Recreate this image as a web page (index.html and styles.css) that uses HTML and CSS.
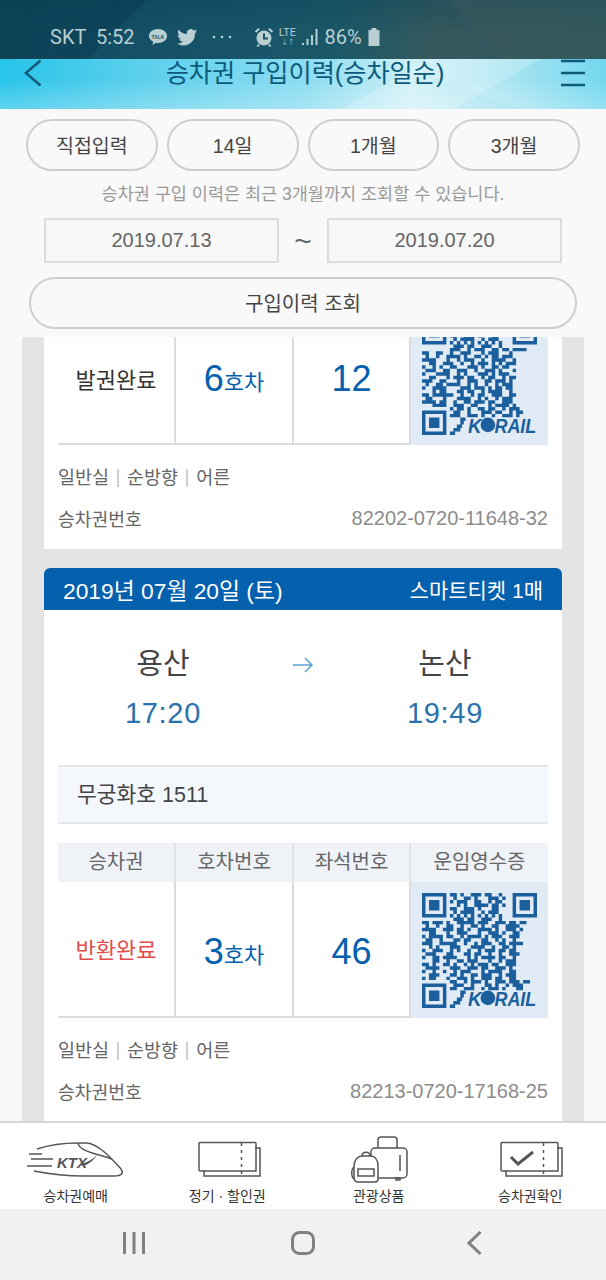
FILE: index.html
```html
<!DOCTYPE html>
<html lang="ko">
<head>
<meta charset="utf-8">
<title>승차권 구입이력</title>
<link rel="stylesheet" href="styles.css">
</head>
<body>
<div class="phone">
  <svg class="defs" width="0" height="0" aria-hidden="true">
    <defs>
      <g id="qr-frame">
        <path class="qr-fill" fill-rule="evenodd" d="M0 0h7v7H0zM1 1v5h5V1zM2 2h3v3H2zM26 0h7v7h-7zM27 1v5h5V1zM28 2h3v3h-3zM0 26h7v7H0zM1 27v5h5v-5zM2 28h3v3H2z"/>
        <path class="qr-bg" d="M8 28h25v5H8z"/>
        <path class="qr-stroke" d="M8 32.500h1.500M9 31.500h2M10 30.500h1.500M11 29.500h1M11 28.500h1.500"/>
        <text class="qr-logo" x="13.200" y="32.300" textLength="3.900" lengthAdjust="spacingAndGlyphs">K</text>
        <circle class="qr-fill" cx="18.900" cy="30.100" r="2.100"/>
        <text class="qr-logo" x="20.800" y="32.300" textLength="12" lengthAdjust="spacingAndGlyphs">RAIL</text>
      </g>
      <path id="qr-a" class="qr-stroke" d="M8 .5h2m1 0h1m2 0h3m1 0h2m2 0h1M9 1.500h1m2 0h2m1 0h1m3 0h3m1 0h1M8 2.500h1m1 0h3m2 0h2m2 0h1m1 0h2M10 3.500h1m1 0h1m2 0h4m1 0h2m1 0h1M8 4.500h2m2 0h3m1 0h1m3 0h2M9 5.500h1m1 0h4m2 0h1m1 0h3M8 6.500h1m1 0h1m1 0h1m1 0h1m1 0h1m1 0h1m1 0h1m1 0h1M9 7.500h3m1 0h2m2 0h3m2 0h1M0 8.500h2m1 0h3m1 0h1m2 0h5m1 0h3m2 0h3m1 0h2m1 0h2M1 9.500h1m2 0h1m2 0h2m2 0h1m2 0h2m1 0h1m2 0h2m2 0h4M0 10.500h4m2 0h3m1 0h2m1 0h1m2 0h4m1 0h1m2 0h3m1 0h1M2 11.500h2m3 0h1m2 0h3m3 0h1m2 0h3m1 0h1m2 0h2M0 12.500h1m1 0h4m1 0h2m2 0h1m1 0h4m1 0h1m1 0h3m2 0h3M1 13.500h2m2 0h1m3 0h2m1 0h2m3 0h2m2 0h1m1 0h1m2 0h1M0 14.500h3m2 0h5m2 0h1m2 0h1m1 0h3m2 0h2m1 0h4M2 15.500h1m1 0h1m3 0h3m3 0h4m2 0h1m2 0h2m1 0h1M0 16.500h1m2 0h3m2 0h1m1 0h1m2 0h1m2 0h1m1 0h3m1 0h2m1 0h2M1 17.500h3m3 0h2m3 0h2m1 0h2m2 0h1m2 0h1m2 0h3M0 18.500h1m2 0h2m1 0h4m3 0h1m1 0h1m1 0h4m1 0h2m2 0h1M3 19.500h2m2 0h1m2 0h2m1 0h3m3 0h1m2 0h1m1 0h3M0 20.500h2m1 0h1m2 0h2m1 0h1m2 0h1m1 0h1m1 0h3m1 0h2m2 0h3M1 21.500h4m3 0h3m2 0h3m1 0h2m2 0h3m1 0h1M0 22.500h1m2 0h1m2 0h1m2 0h1m1 0h3m3 0h1m1 0h4m2 0h2M2 23.500h3m3 0h2m1 0h1m2 0h2m1 0h3m2 0h1m1 0h3M0 24.500h1m1 0h2m3 0h1m2 0h3m1 0h1m2 0h3m1 0h2m2 0h2M8 25.500h2m2 0h1m1 0h3m1 0h1m2 0h3m1 0h3m1 0h2M9 26.500h3m2 0h1m3 0h2m1 0h1m2 0h1m1 0h3M8 27.500h2m2 0h3m2 0h1m1 0h3m1 0h1m3 0h2"/>
      <path id="qr-b" class="qr-stroke" d="M8 4.500h2m2 0h3m1 0h1m3 0h2M9 5.500h1m1 0h4m2 0h1m1 0h3M8 6.500h1m1 0h1m1 0h1m1 0h1m1 0h1m1 0h1m1 0h1m1 0h1M9 7.500h3m1 0h2m2 0h3m2 0h1M8 8.500h3m2 0h1m1 0h3m2 0h2m1 0h2m1 0h4M0 9.500h2m2 0h2m2 0h1m2 0h3m3 0h1m1 0h3m3 0h1M1 10.500h1m2 0h1m2 0h4m1 0h1m2 0h2m1 0h1m1 0h2m1 0h3M0 11.500h4m3 0h1m2 0h1m1 0h3m2 0h1m2 0h4m2 0h1M2 12.500h2m2 0h3m2 0h1m2 0h1m1 0h3m1 0h1m1 0h1m1 0h3M0 13.500h1m2 0h1m1 0h1m2 0h2m3 0h3m1 0h1m2 0h2m1 0h2M1 14.500h3m2 0h2m2 0h3m2 0h1m2 0h3m1 0h1m3 0h1M0 15.500h1m3 0h4m2 0h1m1 0h1m3 0h3m1 0h1m1 0h3M2 16.500h2m3 0h1m1 0h3m1 0h2m2 0h1m1 0h2m2 0h1m1 0h2M0 17.500h3m2 0h2m3 0h1m2 0h3m2 0h2m1 0h3m1 0h1M1 18.500h1m2 0h2m1 0h4m2 0h1m1 0h1m2 0h1m2 0h1m1 0h3M0 19.500h1m2 0h4m4 0h3m1 0h3m1 0h1m1 0h2m1 0h2M3 20.500h1m1 0h2m3 0h2m1 0h2m2 0h1m1 0h4m2 0h1M0 21.500h2m1 0h6m2 0h1m2 0h1m1 0h2m2 0h3m2 0h2M1 22.500h2m3 0h1m3 0h4m2 0h1m1 0h1m2 0h1m1 0h3M0 23.500h4m1 0h2m2 0h1m2 0h2m1 0h3m1 0h2m2 0h3M3 24.500h4m2 0h3m2 0h2m3 0h1m1 0h4m1 0h1M8 25.500h1m1 0h2m1 0h1m2 0h2m1 0h2m2 0h1m1 0h3M9 26.500h2m2 0h1m3 0h3m1 0h2m2 0h1m1 0h2M8 27.500h3m2 0h3m1 0h1m2 0h1m2 0h3m1 0h1"/>
      <g id="ticket">
        <path d="M6 29v6h56V7h-5"/>
        <path d="M2 1.500h55a1 1 0 0 1 1 1V30H2a1 1 0 0 1-1-1V2.500a1 1 0 0 1 1-1z"/>
        <path class="dash" d="M43.500 2v33"/>
      </g>
    </defs>
  </svg>

  <header class="statusbar">
    <span class="status-text">SKT 5:52</span>
    <svg class="st-talk" viewBox="0 0 20 18"><path class="st-fill" d="M10 1c5 0 9 3 9 7s-4 7-9 7c-.7 0-1.300 0-2-.2L4.500 17l.6-3.400C2.600 12.300 1 10.300 1 8c0-4 4-7 9-7z"/><text class="st-talk-text" x="10" y="10.500">TALK</text></svg>
    <svg class="st-bird" viewBox="0 0 20 17"><path class="st-fill" d="M20 2c-.7.3-1.500.5-2.300.6.800-.5 1.500-1.300 1.800-2.200-.8.500-1.700.8-2.600 1A4.100 4.100 0 0 0 9.900 5.100C6.500 4.900 3.500 3.300 1.400.8c-1.100 1.900-.5 4.300 1.300 5.500-.7 0-1.300-.2-1.900-.5 0 2 1.400 3.700 3.300 4.100-.6.200-1.200.2-1.900.1.500 1.600 2 2.800 3.800 2.800A8.200 8.200 0 0 1 0 14.500 11.600 11.600 0 0 0 18 4.200c.8-.6 1.500-1.300 2-2.200z"/></svg>
    <svg class="st-dots" viewBox="0 0 20 4"><circle class="st-fill" cx="2" cy="2" r="1.300"/><circle class="st-fill" cx="10" cy="2" r="1.300"/><circle class="st-fill" cx="18" cy="2" r="1.300"/></svg>
    <svg class="st-alarm" viewBox="0 0 20 20"><circle class="st-fill" cx="10" cy="11" r="7.500"/><path class="st-cut" d="M10 6.500V11.500H14"/><path class="st-line" d="M1.500 5 5 1.800M18.500 5 15 1.800M5 17.500l-1.500 2M15 17.500l1.500 2"/></svg>
    <span class="st-lte"><span class="st-lte-top">LTE</span><span class="st-lte-arrows">↓↑</span></span>
    <svg class="st-signal" viewBox="0 0 16 18"><path class="st-fill" d="M0 15h2v2H0zM4.500 11h2v6h-2zM9 7h2v10H9zM13.500 1h2v16h-2z"/></svg>
    <span class="status-text st-pct">86%</span>
    <svg class="st-batt" viewBox="0 0 12 18"><path class="st-fill" d="M3.500 0h5v2h3v16H.5V2h3z"/></svg>
  </header>

  <nav class="titlebar">
    <svg class="tb-back" viewBox="0 0 18 28"><path d="M16.500 1.500 1.800 14l14.700 12.500"/></svg>
    <h1 class="tb-title">승차권 구입이력(승차일순)</h1>
    <svg class="tb-menu" viewBox="0 0 26 28"><path d="M1 2h24M1 14h24M1 26h24"/></svg>
  </nav>

  <section class="filters">
    <div class="pills">
      <button class="pill">직접입력</button>
      <button class="pill">14일</button>
      <button class="pill">1개월</button>
      <button class="pill">3개월</button>
    </div>
    <p class="note">승차권 구입 이력은 최근 3개월까지 조회할 수 있습니다.</p>
    <div class="dates">
      <div class="date">2019.07.13</div>
      <span class="tilde">~</span>
      <div class="date">2019.07.20</div>
    </div>
    <button class="query">구입이력 조회</button>
  </section>

  <main class="viewport">
    <div class="list">
      <article class="card card-cut">
        <div class="ticket-row ticket-row-cut">
          <div class="cell status">발권완료</div>
          <div class="cell car"><b>6</b>호차</div>
          <div class="cell seat">12</div>
          <div class="cell qr"><svg class="qr-svg" viewBox="0 0 33 33"><use href="#qr-b"/><use href="#qr-frame"/></svg></div>
        </div>
        <div class="meta">
          <div class="meta-tags">일반실<i></i>순방향<i></i>어른</div>
          <div class="meta-no"><span>승차권번호</span><span class="no">82202-0720-11648-32</span></div>
        </div>
      </article>

      <article class="card">
        <div class="card-head">
          <span class="card-date">2019년 07월 20일 (토)</span>
          <span class="card-kind">스마트티켓 1매</span>
        </div>
        <div class="route">
          <div class="stop"><div class="stop-name">용산</div><div class="stop-time">17:20</div></div>
          <svg class="route-arrow" viewBox="0 0 20 16"><path d="M0 8h19M12 1l7 7-7 7"/></svg>
          <div class="stop"><div class="stop-name">논산</div><div class="stop-time">19:49</div></div>
        </div>
        <div class="train">무궁화호 1511</div>
        <div class="ticket-head">
          <div class="th">승차권</div>
          <div class="th">호차번호</div>
          <div class="th">좌석번호</div>
          <div class="th">운임영수증</div>
        </div>
        <div class="ticket-row">
          <div class="cell status status-red">반환완료</div>
          <div class="cell car"><b>3</b>호차</div>
          <div class="cell seat">46</div>
          <div class="cell qr"><svg class="qr-svg" viewBox="0 0 33 33"><use href="#qr-a"/><use href="#qr-frame"/></svg></div>
        </div>
        <div class="meta">
          <div class="meta-tags">일반실<i></i>순방향<i></i>어른</div>
          <div class="meta-no"><span>승차권번호</span><span class="no">82213-0720-17168-25</span></div>
        </div>
      </article>
    </div>
  </main>

  <footer class="tabbar">
    <a class="tab">
      <svg class="tab-icon ic-train" viewBox="0 0 100 40"><path d="M13 9C25 5 40 3 54 3h8c12 0 26 16 35 26 3 4 1 7-7 7H60C40 36 25 34 10 31"/><path d="M54 3c1 8 16 10 34 16M5 14h13M7 19h22M3 26h25"/><path class="sw" d="M56 24c6-1 12-4 17-9-3 5-8 9-14 11z"/><text class="ktx" x="33" y="28">KTX</text></svg>
      <span class="tab-label">승차권예매</span>
    </a>
    <a class="tab">
      <svg class="tab-icon ic-ticket" viewBox="0 0 64 38"><use href="#ticket"/></svg>
      <span class="tab-label">정기 · 할인권</span>
    </a>
    <a class="tab">
      <svg class="tab-icon ic-bag" viewBox="0 0 60 50"><rect x="21" y="13" width="36" height="30" rx="4"/><path d="M28 13V5a3 3 0 0 1 3-3h13a3 3 0 0 1 3 3v8M50 20v16M46 43h4v2h-4z"/><path class="bag-front" d="M8 47c-3 0-4-2-4-5V31c0-6 4-10 8-10h8c5 0 8 4 8 10v13c0 2-1 3-3 3z"/><path d="M12 21c0-5 8-5 8 0M8 41v-7h16v7zM4 32C1 34 1 42 4 44"/></svg>
      <span class="tab-label">관광상품</span>
    </a>
    <a class="tab">
      <svg class="tab-icon ic-ticket ic-check" viewBox="0 0 64 38"><use href="#ticket"/><path class="chk" d="M11 16l7 7 15-12"/></svg>
      <span class="tab-label">승차권확인</span>
    </a>
  </footer>

  <div class="sysnav">
    <svg class="sys-recent" viewBox="0 0 22 24"><path d="M1.500 1v22M11 1v22M20.500 1v22"/></svg>
    <svg class="sys-home" viewBox="0 0 24 24"><rect x="1.500" y="1.500" width="21" height="21" rx="7"/></svg>
    <svg class="sys-back" viewBox="0 0 15 24"><path d="M13.500 1 2 12l11.500 11"/></svg>
  </div>
</div>
</body>
</html>
```

FILE: styles.css
```css
* { box-sizing: border-box; }
html, body { margin: 0; padding: 0; }
body {
  width: 606px;
  height: 1280px;
  overflow: hidden;
  font-family: "Liberation Sans", "Noto Sans CJK KR", sans-serif;
  background: #f9f9f9;
  color: #444;
}
.phone { display: flex; flex-direction: column; height: 1280px; }
.defs { display: block; height: 0; }

.qr-fill { fill: #1b5f9d; }
.qr-bg { fill: #e0ebf5; }
.qr-stroke { fill: none; stroke: #1b5f9d; stroke-width: 1; }
.qr-logo { font: italic 700 5.600px "Liberation Sans", sans-serif; fill: #1b5f9d; }

/* status bar */
.statusbar {
  height: 59px;
  display: flex;
  align-items: center;
  padding: 15px 0 0 50px;
  background:
    linear-gradient(135deg, rgba(5, 50, 70, .35) 0 22%, rgba(255, 255, 255, 0) 22%),
    linear-gradient(225deg, rgba(60, 90, 90, .4) 0 24%, rgba(255, 255, 255, 0) 24%),
    linear-gradient(180deg, rgba(8, 62, 84, .35), rgba(20, 60, 70, 0) 60%),
    linear-gradient(90deg, #114c61 0%, #155268 30%, #1a5869 55%, #36595e 72%, #2c585f 100%);
}
.status-text { font: 20px Roboto, "Liberation Sans", sans-serif; color: #b9cfd2; white-space: pre; word-spacing: 5px; }
.st-fill { fill: #b9cfd2; }
.st-talk { width: 20px; height: 18px; margin-left: 13px; }
.st-talk-text { font: 700 5px "Liberation Sans", sans-serif; fill: #1a5568; text-anchor: middle; }
.st-bird { width: 20px; height: 17px; margin-left: 9px; }
.st-dots { width: 20px; height: 4px; margin-left: 15px; }
.st-alarm { width: 20px; height: 20px; margin-left: 22px; }
.st-cut { fill: none; stroke: #1a5568; stroke-width: 2; }
.st-line { fill: none; stroke: #b9cfd2; stroke-width: 2; }
.st-lte { display: flex; flex-direction: column; align-items: center; width: 18px; margin-left: 5px; line-height: 9px; }
.st-lte-top { font: 11px/10px Roboto, sans-serif; color: #b9cfd2; }
.st-lte-arrows { font: 9px/8px "DejaVu Sans", sans-serif; color: #7fa3ab; letter-spacing: -1px; }
.st-signal { width: 16px; height: 18px; margin-left: 5px; }
.st-pct { margin-left: 7px; word-spacing: 0; }
.st-batt { width: 12px; height: 18px; margin-left: 6px; }

/* title bar */
.titlebar {
  height: 50px;
  display: grid;
  grid-template-columns: 1fr auto 1fr;
  align-items: start;
  padding: 0 20px 0 24px;
  background:
    linear-gradient(150deg, rgba(255, 255, 255, 0) 0 62%, rgba(255, 255, 255, .18) 62% 78%, rgba(255, 255, 255, 0) 78%),
    linear-gradient(200deg, rgba(255, 255, 255, .12) 0 30%, rgba(255, 255, 255, 0) 30%),
    linear-gradient(180deg, rgba(255, 255, 255, 0) 40%, rgba(255, 255, 255, .25) 100%),
    linear-gradient(90deg, #27c4ea 0%, #5fd0ec 25%, #8adcf0 50%, #c9eef6 68%, #a6e3f1 82%, #5ed1ec 100%);
}
.tb-back { width: 18px; height: 28px; fill: none; stroke: #0f5a78; stroke-width: 2.500; }
.tb-menu { width: 26px; height: 28px; justify-self: end; fill: none; stroke: #0f5a78; stroke-width: 2.500; }
.tb-title { margin: 0; font-size: 25.200px; line-height: 28px; font-weight: 400; color: #0c5a7c; white-space: nowrap; }

/* filters */
.filters { height: 228px; padding: 10px 26px 0; background: #f9f9f9; display: flex; flex-direction: column; }
.pills { display: flex; gap: 9px; }
.pill {
  flex: 1;
  height: 52px;
  border: 2px solid #cfcfcf;
  border-radius: 26px;
  background: #f9f9f9;
  font: 400 19.500px "Liberation Sans", "Noto Sans CJK KR", sans-serif;
  color: #444;
  padding: 0 0 2px;
}
.note { margin: 12px 0 0; height: 22px; font-size: 17.500px; line-height: 22px; color: #9a9a9a; text-align: center; white-space: nowrap; }
.dates { display: flex; align-items: center; justify-content: space-between; margin: 13px 18px 0; }
.date {
  width: 235px;
  height: 45px;
  border: 2px solid #dcdcdc;
  background: #f7f7f7;
  text-align: center;
  font-size: 20px;
  line-height: 41px;
  color: #666;
}
.tilde { font: 30px "Liberation Sans", sans-serif; color: #666; }
.query {
  margin: 14px 3px 0;
  height: 52px;
  border: 2px solid #cfcfcf;
  border-radius: 26px;
  background: #f9f9f9;
  font: 400 20px "Liberation Sans", "Noto Sans CJK KR", sans-serif;
  color: #444;
  padding: 0 0 2px;
}

/* list */
.viewport { flex: 1; min-height: 0; overflow: hidden; padding: 0 22px; }
.list { height: 100%; background: #e4e4e4; padding: 0 22px; display: flex; flex-direction: column; gap: 19px; }
.card { background: #fff; flex: none; border-radius: 6px 6px 0 0; }
.card-cut { border-radius: 0; }
.card-head {
  height: 42px;
  background: #0560ae;
  border-radius: 6px 6px 0 0;
  color: #fff;
  display: flex;
  align-items: center;
  justify-content: space-between;
  padding: 0 19px;
}
.card-date { font-size: 22.800px; }
.card-kind { font-size: 21px; }
.route { height: 155px; display: grid; grid-template-columns: 238px 42px 242px; align-items: center; justify-items: center; }
.stop { text-align: center; }
.stop-name { font-size: 29px; line-height: 40px; color: #444; }
.stop-time { font-size: 29px; line-height: 36px; margin-top: 11px; color: #2a72ae; letter-spacing: .7px; }
.route-arrow { width: 20px; height: 16px; margin-bottom: 45px; fill: none; stroke: #5aa0d0; stroke-width: 1.500; }
.train {
  margin: 0 14px;
  height: 59px;
  border-top: 2px solid #e4e8eb;
  border-bottom: 2px solid #e4e8eb;
  background: #f4f7fb;
  padding-left: 19px;
  font-size: 21.500px;
  line-height: 56px;
  color: #444;
}
.ticket-head {
  margin: 19px 14px 0;
  display: grid;
  grid-template-columns: 118px 118px 117px 137px;
  height: 39px;
  background: #eff2f6;
}
.th { font-size: 20px; line-height: 38px; text-align: center; color: #666; border-right: 2px solid #dfe2e6; }
.th:last-child { border-right: 0; }
.ticket-row {
  margin: 0 14px;
  display: grid;
  grid-template-columns: 118px 118px 117px 137px;
  grid-template-rows: 136px;
  height: 136px;
  align-items: stretch;
  align-content: end;
  overflow: hidden;
}
.ticket-row-cut { height: 108px; }
.ticket-row-cut .status { padding-top: 5px; }
.cell {
  display: flex;
  align-items: center;
  justify-content: center;
  border-right: 2px solid #dcdcdc;
  border-bottom: 2px solid #dcdcdc;
}
.status { font-size: 22px; color: #333; padding-bottom: 2px; }
.status-red { color: #e24c4b; }
.car { font-size: 22px; color: #0560ae; padding-top: 8px; }
.car b { font-weight: 400; font-size: 36px; line-height: 40px; margin-top: -3px; }
.seat { font-size: 36px; color: #0560ae; padding-top: 6px; }
.qr { background: #e0ebf5; border-right: 0; border-bottom: 0; }
.qr-svg { width: 115px; height: 115px; display: block; }
.meta { padding: 0 14px; height: 104px; }
.meta-tags { display: flex; align-items: center; padding-top: 14px; height: 52px; font-size: 18.500px; line-height: 24px; color: #666; }
.meta-tags i { width: 2px; height: 18px; margin: 0 8px; background: #cfcfcf; }
.meta-no { display: flex; justify-content: space-between; align-items: center; height: 42px; font-size: 18.200px; color: #666; }
.no { font-size: 20px; color: #8c8c8c; }

/* tab bar */
.tabbar {
  height: 88px;
  flex: none;
  background: #fff;
  border-top: 2px solid #d6d6d6;
  display: grid;
  grid-template-columns: repeat(4, 1fr);
}
.tab { display: flex; flex-direction: column; align-items: center; }
.tab-icon { display: block; height: 50px; margin-top: 12px; overflow: visible; fill: none; stroke: #555; stroke-width: 1.500; }
.ic-train { width: 100px; height: 40px; margin-top: 17px; margin-bottom: 7px; margin-right: 3px; }
.ic-ticket { width: 64px; height: 38px; margin-top: 18px; margin-bottom: 8px; margin-left: 6px; }
.ic-check { margin-left: 4px; }
.ic-bag { width: 60px; height: 50px; margin-top: 12px; margin-bottom: 2px; margin-left: 2px; }
.dash { stroke-dasharray: 3 4; }
.sw { fill: #555; stroke: none; }
.ktx { font: italic 700 15px "Liberation Sans", sans-serif; fill: #555; stroke: none; }
.bag-front { fill: #fff; }
.chk { stroke-width: 3; }
.tab-label { font-size: 14px; line-height: 18px; color: #333; white-space: nowrap; }

/* system nav */
.sysnav {
  height: 71px;
  flex: none;
  background: #f1f1f1;
  display: grid;
  grid-template-columns: 246px 114px 246px;
  align-items: center;
  justify-items: center;
  padding-bottom: 3px;
}
.sysnav svg { fill: none; stroke: #808080; stroke-width: 3; }
.sys-recent { width: 22px; height: 24px; justify-self: start; margin-left: 123px; }
.sys-home { width: 24px; height: 24px; }
.sys-back { width: 15px; height: 24px; justify-self: start; margin-left: 107px; }
```
